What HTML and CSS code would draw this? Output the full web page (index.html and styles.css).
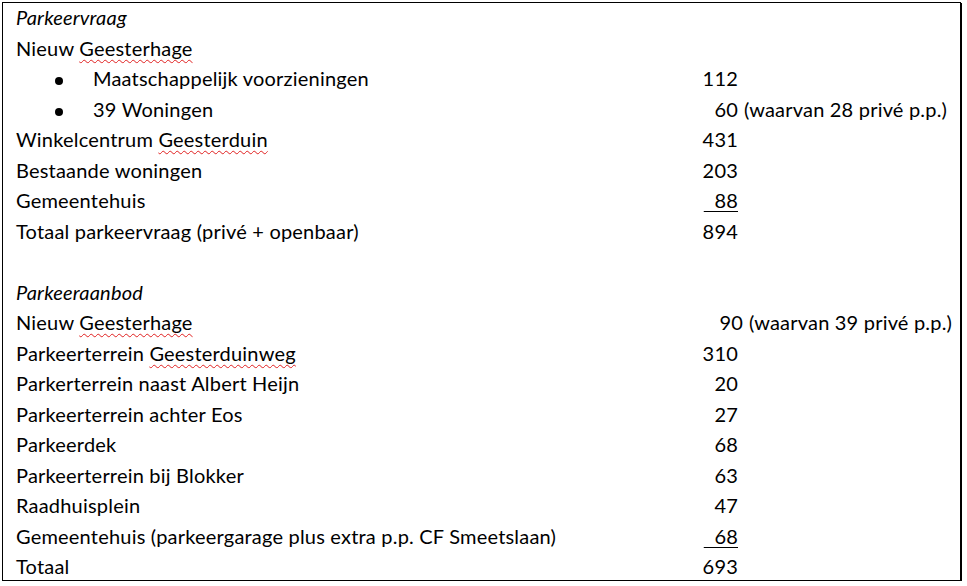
FILE: index.html
```html
<!DOCTYPE html>
<html lang="nl">
<head>
<meta charset="utf-8">
<title>Parkeervraag en parkeeraanbod</title>
<link rel="stylesheet" href="styles.css">
</head>
<body>
<div class="page">
  <div class="row"><span class="head">Parkeervraag</span></div>
  <div class="row"><span class="label">Nieuw <span class="sp">Geesterhage</span></span></div>
  <div class="row"><span class="label bul"><span class="dot"></span>Maatschappelijk voorzieningen</span><span class="num">112</span></div>
  <div class="row"><span class="label bul"><span class="dot"></span>39 Woningen</span><span class="num">60</span><span class="extra">(waarvan 28 privé p.p.)</span></div>
  <div class="row"><span class="label">Winkelcentrum <span class="sp">Geesterduin</span></span><span class="num">431</span></div>
  <div class="row"><span class="label">Bestaande woningen</span><span class="num">203</span></div>
  <div class="row"><span class="label">Gemeentehuis</span><span class="num"><span class="ul">&nbsp;&nbsp;88</span></span></div>
  <div class="row"><span class="label">Totaal parkeervraag (privé + openbaar)</span><span class="num">894</span></div>
  <div class="row"></div>
  <div class="row"><span class="head">Parkeeraanbod</span></div>
  <div class="row"><span class="label">Nieuw <span class="sp">Geesterhage</span></span><span class="num wide">90</span><span class="extra">(waarvan 39 privé p.p.)</span></div>
  <div class="row"><span class="label">Parkeerterrein <span class="sp">Geesterduinweg</span></span><span class="num">310</span></div>
  <div class="row"><span class="label">Parkerterrein naast Albert Heijn</span><span class="num">20</span></div>
  <div class="row"><span class="label">Parkeerterrein achter Eos</span><span class="num">27</span></div>
  <div class="row"><span class="label">Parkeerdek</span><span class="num">68</span></div>
  <div class="row"><span class="label">Parkeerterrein bij Blokker</span><span class="num">63</span></div>
  <div class="row"><span class="label">Raadhuisplein</span><span class="num">47</span></div>
  <div class="row"><span class="label">Gemeentehuis (parkeergarage plus extra p.p. CF Smeetslaan)</span><span class="num"><span class="ul">&nbsp;&nbsp;68</span></span></div>
  <div class="row"><span class="label">Totaal</span><span class="num">693</span></div>
</div>
</body>
</html>
```

FILE: styles.css
```css
html, body {
  margin: 0;
  padding: 0;
  background: #ffffff;
}

body {
  font-family: Lato, "Open Sans", sans-serif;
  font-size: 20px;
  letter-spacing: 0.2px;
  color: #000000;
}

.page {
  box-sizing: border-box;
  width: 959px;
  height: 579px;
  margin: 2px 0 0 2px;
  border: 1px solid #000000;
  box-shadow: 1px 1px 0 #000000;
  padding: 0 0 0 13px;
  overflow: hidden;
}

.row {
  display: flex;
  height: 30.5px;
  line-height: 28.5px;
  white-space: nowrap;
}

.head {
  font-style: italic;
}

.label {
  width: 685px;
  flex: none;
}

.label.bul {
  box-sizing: border-box;
  padding-left: 39px;
}

.dot {
  display: inline-block;
  width: 8px;
  height: 8px;
  border-radius: 50%;
  background: #000000;
  margin-right: 30px;
  vertical-align: 1px;
}

.num {
  width: 37px;
  flex: none;
  text-align: right;
}

.num.wide {
  width: 42px;
}

.ul {
  text-decoration: underline;
  text-decoration-thickness: 1px;
  text-underline-offset: 3px;
}

.extra {
  margin-left: 6px;
}

.sp {
  text-decoration: underline wavy #e02020;
  text-decoration-thickness: 1px;
  text-underline-offset: 3px;
  text-decoration-skip-ink: none;
}
```
